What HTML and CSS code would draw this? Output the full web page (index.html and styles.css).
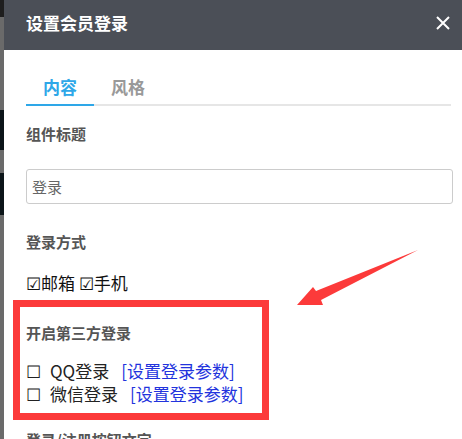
FILE: index.html
```html
<!DOCTYPE html>
<html lang="zh">
<head>
<meta charset="utf-8">
<title>设置会员登录</title>
<link rel="stylesheet" href="styles.css">
</head>
<body>
<div class="page">
  <div class="backdrop"></div>
  <div class="modal">
    <div class="modal-header">
      <span class="modal-title">设置会员登录</span>
      <span class="close">
        <svg width="14" height="14" viewBox="0 0 14 14"><path d="M1 1L13 13M13 1L1 13" stroke="#fff" stroke-width="2" fill="none"/></svg>
      </span>
    </div>
    <div class="modal-body">
      <div class="tabs">
        <div class="tab active">内容</div>
        <div class="tab">风格</div>
      </div>
      <div class="label first">组件标题</div>
      <div class="input">登录</div>
      <div class="label">登录方式</div>
      <div class="checks">☑邮箱 ☑手机</div>
      <div class="highlight">
        <div class="label">开启第三方登录</div>
        <div class="third">
          <div class="row"><span class="box">☐</span><span class="name">QQ登录</span><a class="link">[设置登录参数]</a></div>
          <div class="row"><span class="box">☐</span><span class="name">微信登录</span><a class="link">[设置登录参数]</a></div>
        </div>
      </div>
      <div class="label last">登录/注册按钮文字</div>
    </div>
  </div>
  <svg class="arrow" width="140" height="70" viewBox="0 0 140 70">
    <path d="M7 60 L23 42 L26 46 L128 5 L31 55 L33 60 Z" fill="#fc3a3a"/>
  </svg>
</div>
</body>
</html>
```

FILE: styles.css
```css
html, body {
  margin: 0;
  padding: 0;
}
body {
  width: 462px;
  height: 439px;
  overflow: hidden;
  font-family: "Noto Sans CJK SC", "Noto Sans", sans-serif;
  background: #fff;
}
.page {
  position: relative;
  display: flex;
  width: 462px;
  height: 439px;
  overflow: hidden;
}
.backdrop {
  width: 4px;
  flex: none;
  background: linear-gradient(to bottom,
    #1e1e1e 0, #1e1e1e 17px,
    #6a6a6a 17px, #6a6a6a 110px,
    #0c1519 110px, #0c1519 150px,
    #6a6a6a 150px, #6a6a6a 173px,
    #0c1519 173px, #0c1519 215px,
    #6a6a6a 215px, #6a6a6a 100%);
}
.modal {
  flex: 1;
  background: #fff;
  display: flex;
  flex-direction: column;
}
.modal-header {
  height: 50px;
  background: #4b4f57;
  display: flex;
  align-items: center;
  justify-content: space-between;
  padding: 0 12px 0 22px;
  flex: none;
}
.modal-title {
  color: #fff;
  font-size: 17px;
  font-weight: bold;
  line-height: 20px;
  margin-top: -4px;
}
.close {
  display: flex;
  margin-top: -4px;
}
.modal-body {
  padding: 26px 9px 0 22px;
}
.tabs {
  display: flex;
  border-bottom: 2px solid #e6e6e6;
  margin-right: 2px;
}
.tab {
  width: 68px;
  text-align: center;
  font-size: 17px;
  font-weight: bold;
  line-height: 22px;
  padding-bottom: 6px;
  color: #999;
  margin-bottom: -2px;
  border-bottom: 2px solid transparent;
}
.tab.active {
  color: #2ea7e8;
  border-bottom-color: #2ea7e8;
}
.label {
  font-size: 15px;
  font-weight: bold;
  color: #555;
  line-height: 20px;
  margin-top: 28px;
}
.label.first {
  margin-top: 18px;
}
.label.last {
  margin-top: 10px;
}
.input {
  margin-top: 25px;
  height: 33px;
  border: 1px solid #ccc;
  border-radius: 3px;
  font-size: 15px;
  color: #666;
  line-height: 33px;
  padding-left: 5px;
}
.checks {
  margin-top: 20px;
  font-size: 17px;
  line-height: 22px;
  color: #111;
}
.highlight {
  margin: 6px 0 0 -13px;
  width: 236px;
  border: 7px solid #fc3a3a;
  padding: 0 0 8px 6px;
}
.highlight .label {
  margin-top: 16px;
}
.third {
  margin-top: 16px;
}
.row {
  display: flex;
  font-size: 17px;
  line-height: 23px;
  color: #222;
}
.box {
  width: 24px;
}
.name {
  margin-right: 12px;
}
.link {
  color: #2233dd;
}
.arrow {
  position: absolute;
  left: 290px;
  top: 245px;
}
```
